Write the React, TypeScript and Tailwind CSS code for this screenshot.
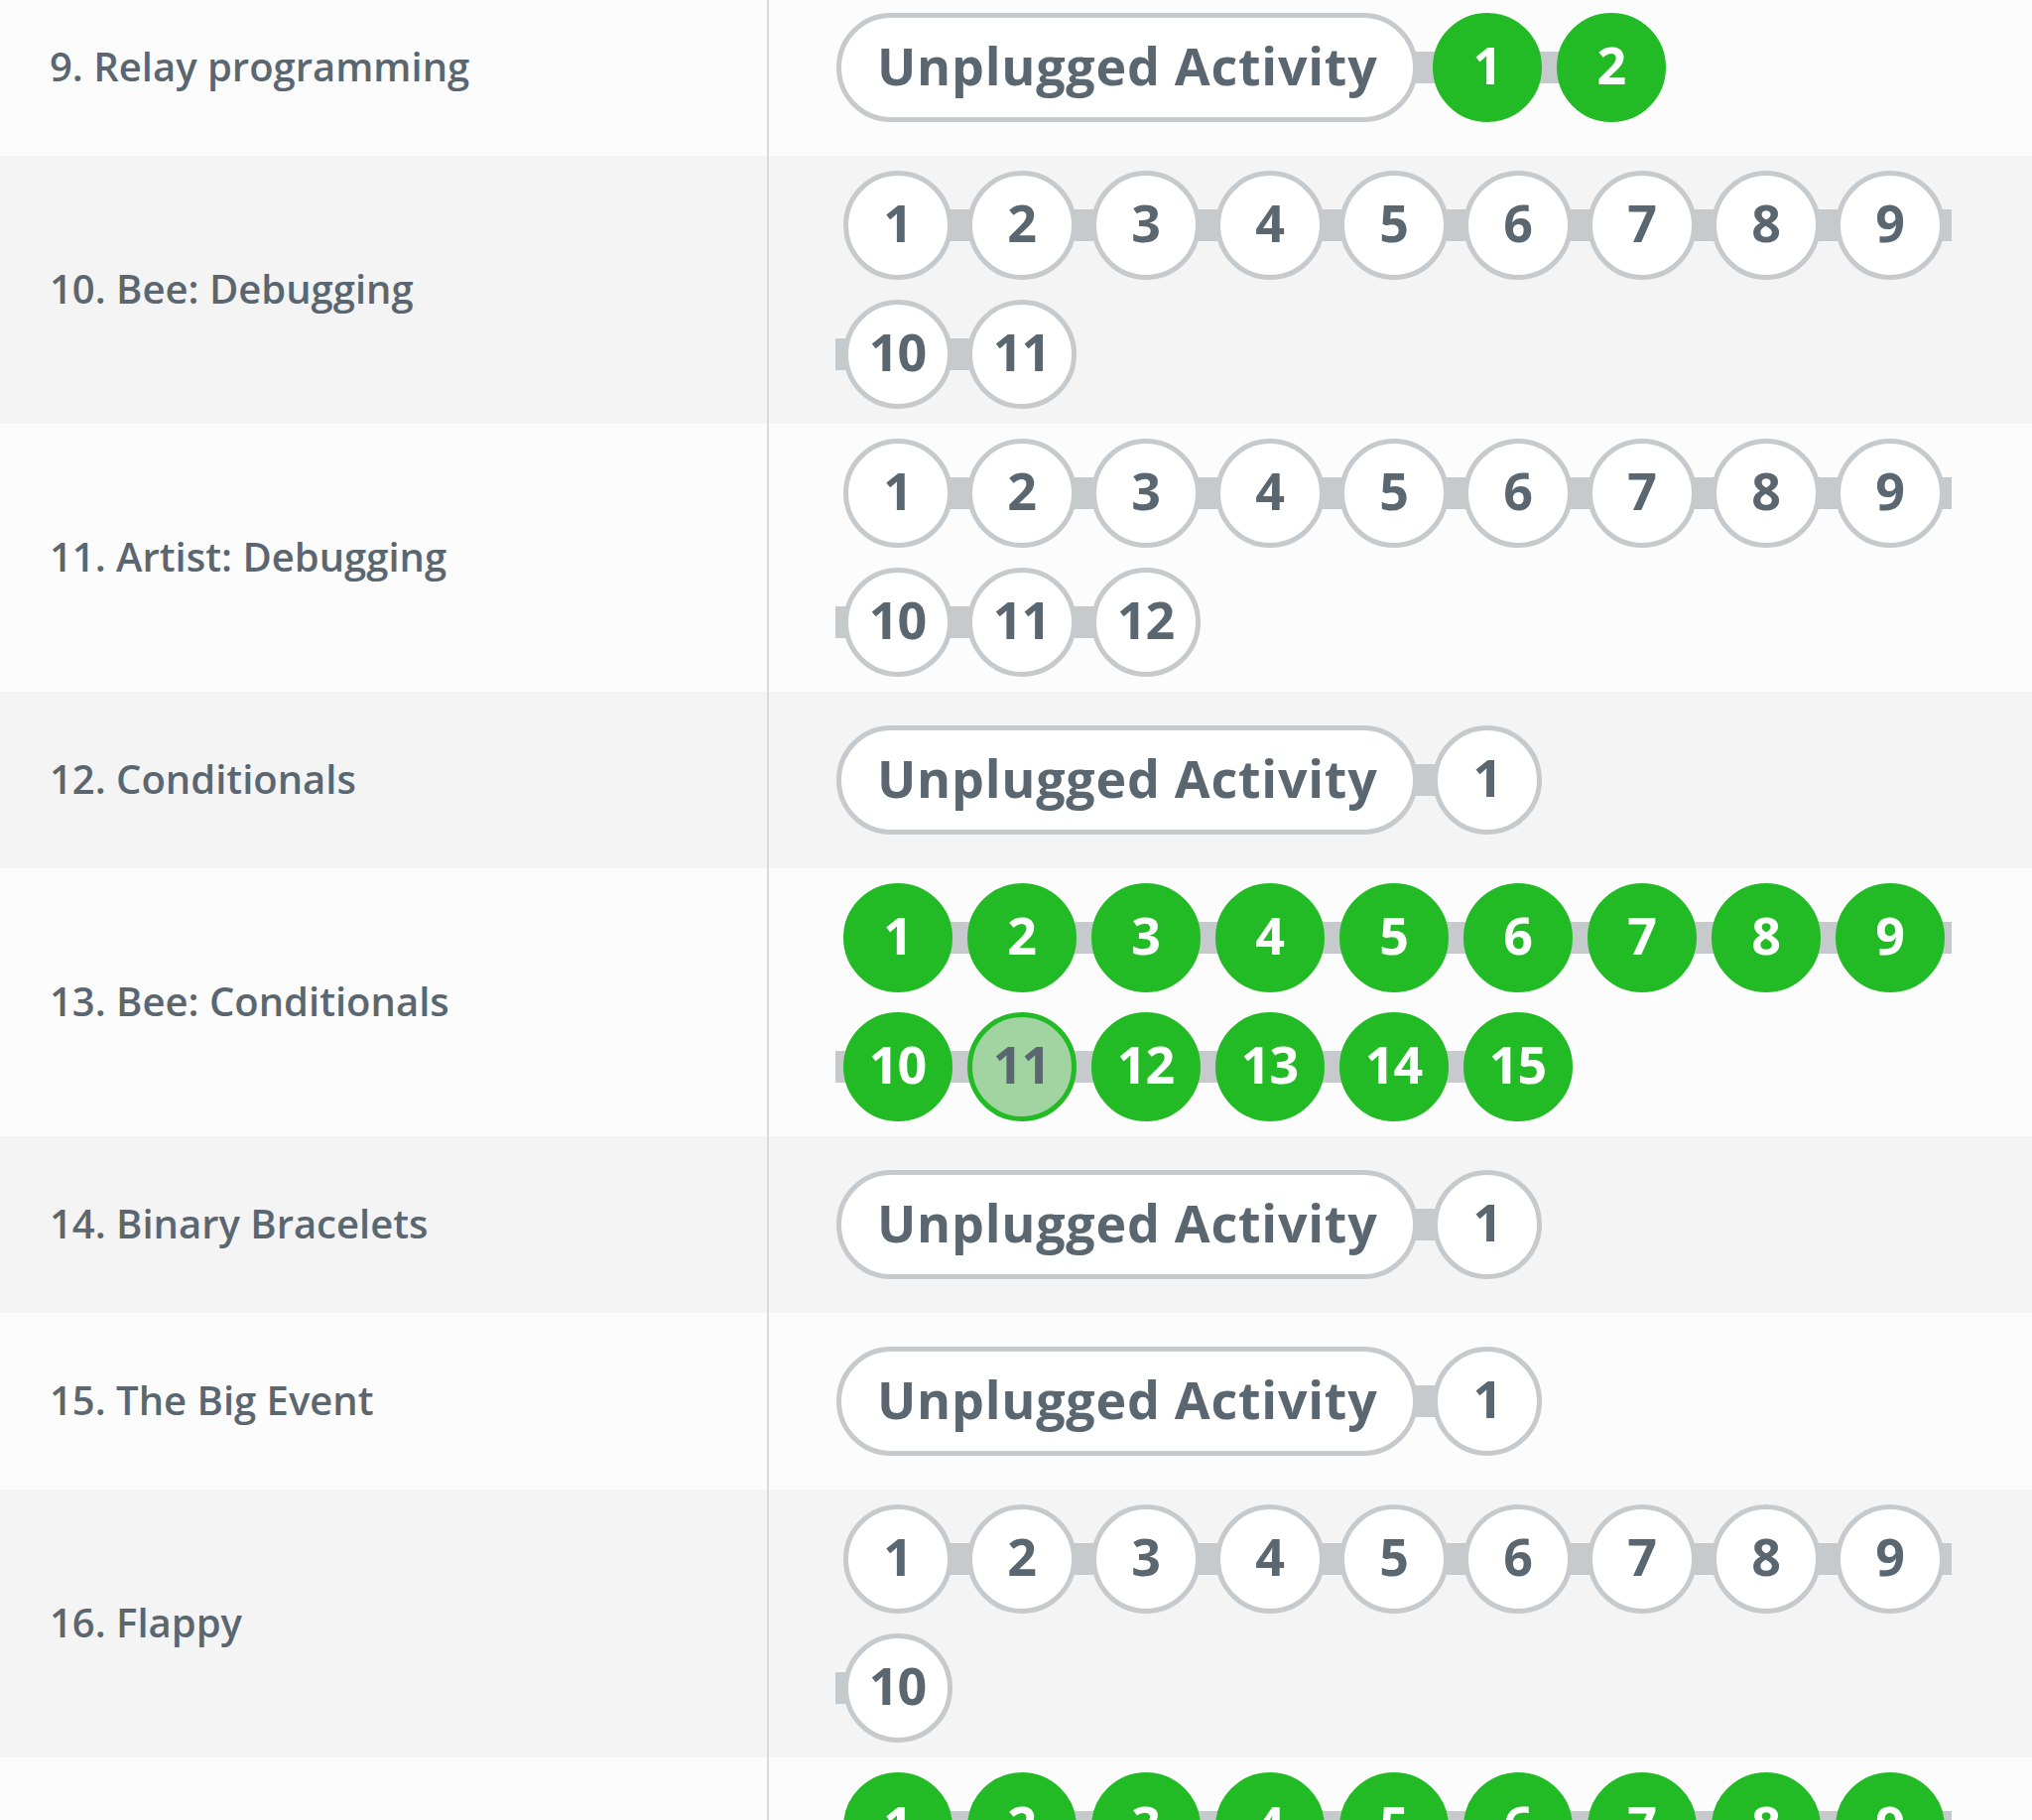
import React from 'react';

type Status = 'none' | 'perfect' | 'attempted';

interface Lesson {
  title: string;
  unplugged?: boolean;
  levels: Status[];
}

const FONT = { fontFamily: '"Open Sans", "Liberation Sans", sans-serif' };

const fill = (n: number, s: Status): Status[] => Array.from({ length: n }, () => s);

const lessons: Lesson[] = [
  { title: '9. Relay programming', unplugged: true, levels: fill(2, 'perfect') },
  { title: '10. Bee: Debugging', levels: fill(11, 'none') },
  { title: '11. Artist: Debugging', levels: fill(12, 'none') },
  { title: '12. Conditionals', unplugged: true, levels: fill(1, 'none') },
  {
    title: '13. Bee: Conditionals',
    levels: fill(15, 'perfect').map((s, i) => (i === 10 ? 'attempted' : s)),
  },
  { title: '14. Binary Bracelets', unplugged: true, levels: fill(1, 'none') },
  { title: '15. The Big Event', unplugged: true, levels: fill(1, 'none') },
  { title: '16. Flappy', levels: fill(10, 'none') },
  { title: '17. Play Lab: Create a Story', levels: fill(11, 'perfect') },
];

// connector bar behind each bubble; first/last only get half of it
const barClass = (isFirst: boolean, isLast: boolean) => {
  if (isFirst && isLast) return '';
  if (isFirst) return 'bg-[linear-gradient(#c6cacd,#c6cacd)] bg-no-repeat bg-[length:50%_32px] bg-right';
  if (isLast) return 'bg-[linear-gradient(#c6cacd,#c6cacd)] bg-no-repeat bg-[length:50%_32px] bg-left';
  return 'bg-[linear-gradient(#c6cacd,#c6cacd)] bg-no-repeat bg-[length:100%_32px] bg-center';
};

const Bubble: React.FC<{ n: number; status: Status; isFirst: boolean; isLast: boolean }> = ({
  n,
  status,
  isFirst,
  isLast,
}) => {
  const circle =
    status === 'perfect'
      ? 'bg-[#22bb26] border-[#22bb26] text-white'
      : status === 'attempted'
      ? 'bg-[#a2d4a2] border-[#22bb26] border-[4px] text-[#5b6770]'
      : 'bg-white border-[#c6cacd] text-[#5b6770]';
  return (
    <div className={`px-[7.5px] my-[10px] ${barClass(isFirst, isLast)}`}>
      <div
        className={`w-[110px] h-[110px] rounded-full border-[5px] flex items-center justify-center text-[52px] font-bold leading-none ${circle}`}
      >
        <span className="-mt-[6px] tracking-[-1px]">{n}</span>
      </div>
    </div>
  );
};

const LessonRow: React.FC<{ lesson: Lesson; index: number }> = ({ lesson, index }) => {
  const bg = index % 2 === 0 ? 'bg-[#fcfcfc]' : 'bg-[#f4f4f4]';
  const total = lesson.levels.length + (lesson.unplugged ? 1 : 0);
  return (
    <div className={`flex ${bg}`}>
      <div className="w-[775px] shrink-0 border-r-2 border-[#dadada] flex items-center pl-[50px]">
        <span className="text-[40px] font-semibold text-[#5b6770] leading-none -mt-[2px]">{lesson.title}</span>
      </div>
      <div className="flex-1 min-h-[178px] py-[5px] pl-[67px] flex flex-wrap content-center items-center">
        {lesson.unplugged && (
          <div className={`pl-[1px] pr-[7px] my-[10px] ${barClass(true, total === 1)}`}>
            <div className="h-[110px] rounded-full border-[5px] border-[#c6cacd] bg-white px-[36px] flex items-center">
              <span className="text-[52px] font-bold text-[#5b6770] leading-none tracking-[0.75px] -mt-[5px]">
                Unplugged Activity
              </span>
            </div>
          </div>
        )}
        {lesson.levels.map((s, i) => {
          const pos = i + (lesson.unplugged ? 1 : 0);
          return (
            <Bubble key={i} n={i + 1} status={s} isFirst={pos === 0} isLast={pos === total - 1} />
          );
        })}
      </div>
    </div>
  );
};

const App: React.FC = () => {
  return (
    <div className="w-[2048px] h-[1834px] overflow-hidden bg-[#fcfcfc]" style={FONT}>
      <div className="-mt-[21px]">
        {lessons.map((l, i) => (
          <LessonRow key={l.title} lesson={l} index={i} />
        ))}
      </div>
    </div>
  );
};

export default App;
